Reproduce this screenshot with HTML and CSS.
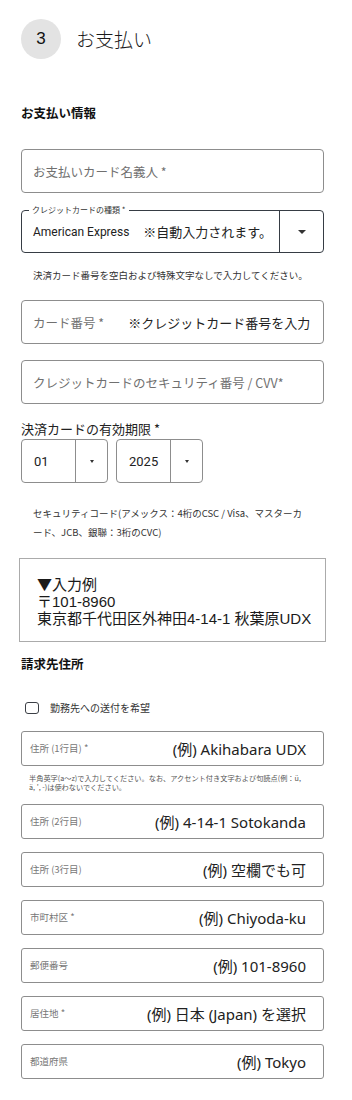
FILE: index.html
```html
<!DOCTYPE html>
<html lang="ja">
<head>
<meta charset="utf-8">
<link rel="stylesheet" href="styles.css">
</head>
<body>
<div class="page">
  <div class="step">
    <div class="step-num">3</div>
    <div class="step-title">お支払い</div>
  </div>

  <h2 class="section-title first">お支払い情報</h2>

  <div class="field big"><span class="ph">お支払いカード名義人 *</span></div>

  <div class="select-main">
    <span class="float-label">クレジットカードの種類 *</span>
    <div class="sel-value"><span class="amex">American Express</span><span class="auto">※自動入力されます。</span></div>
    <div class="sel-btn"><span class="tri"></span></div>
  </div>

  <p class="hint1">決済カード番号を空白および特殊文字なしで入力してください。</p>

  <div class="field big"><span class="ph">カード番号 *</span><span class="note-in">※クレジットカード番号を入力</span></div>

  <div class="field big gap16"><span class="ph">クレジットカードのセキュリティ番号 / CVV*</span></div>

  <div class="exp-label">決済カードの有効期限 *</div>
  <div class="exp-row">
    <div class="mini-sel"><span class="mv">01</span><span class="mb"><span class="tri small"></span></span></div>
    <div class="mini-sel"><span class="mv">2025</span><span class="mb"><span class="tri small"></span></span></div>
  </div>

  <p class="hint2">セキュリティコード(アメックス：4桁のCSC / Visa、マスターカ<br>ード、JCB、銀聯：3桁のCVC)</p>

  <div class="example">
    <div class="ex-line"><span class="mark">▼</span>入力例</div>
    <div class="ex-line">〒101-8960</div>
    <div class="ex-line">東京都千代田区外神田4-14-1 秋葉原UDX</div>
  </div>

  <h2 class="section-title second">請求先住所</h2>

  <label class="check-row"><span class="box"></span><span class="check-text">勤務先への送付を希望</span></label>

  <div class="addr first-addr"><span class="al">住所 (1行目) *</span><span class="av">(例) Akihabara UDX</span></div>
  <p class="hint3">半角英字(a～z)で入力してください。なお、アクセント付き文字および句読点(例：ü,<br>ä, ', -)は使わないでください。</p>
  <div class="addr after-hint"><span class="al">住所 (2行目)</span><span class="av">(例) 4-14-1 Sotokanda</span></div>
  <div class="addr"><span class="al">住所 (3行目)</span><span class="av">(例) 空欄でも可</span></div>
  <div class="addr"><span class="al">市町村区 *</span><span class="av">(例) Chiyoda-ku</span></div>
  <div class="addr"><span class="al">郵便番号</span><span class="av">(例) 101-8960</span></div>
  <div class="addr"><span class="al">居住地 *</span><span class="av">(例) 日本 (Japan) を選択</span></div>
  <div class="addr"><span class="al">都道府県</span><span class="av">(例) Tokyo</span></div>
</div>
</body>
</html>
```

FILE: styles.css
```css
* { box-sizing: border-box; }
html, body { margin: 0; padding: 0; background: #fff; }
body {
  font-family: "Noto Sans CJK JP", "Noto Sans", sans-serif;
  color: #222;
}
.page {
  width: 352px;
  padding: 19px 28px 20px 21px;
}
.step {
  display: flex;
  align-items: center;
  gap: 15px;
}
.step-num {
  width: 40px;
  height: 40px;
  border-radius: 50%;
  background: #e3e3e3;
  display: flex;
  align-items: center;
  justify-content: center;
  font-family: "Liberation Sans", Arial, sans-serif;
  font-size: 17px;
  color: #111;
}
.step-title {
  font-size: 19px;
  font-weight: 300;
  color: #1a1a1a;
  line-height: 24px;
}
.section-title {
  margin: 0;
  font-size: 12.5px;
  font-weight: 700;
  line-height: 18px;
  color: #111;
}
.section-title.first { margin-top: 45px; }
.section-title.second { margin-top: 13px; }

.field {
  border: 1px solid #8d8d8d;
  border-radius: 4px;
  height: 44px;
  display: flex;
  align-items: center;
  padding-left: 11px;
}
.field.big { margin-top: 27px; }
.field.gap16 { margin-top: 16px; }
.ph {
  font-size: 12.5px;
  color: #707070;
  white-space: nowrap;
}
.note-in {
  font-size: 13px;
  color: #222;
  margin-left: 24px;
  white-space: nowrap;
}

.select-main {
  position: relative;
  margin-top: 17px;
  height: 43px;
  border: 1.5px solid #363c44;
  border-radius: 4px;
  display: flex;
}
.float-label {
  position: absolute;
  top: -7px;
  left: 7px;
  padding: 0 3px;
  background: #fff;
  font-size: 8px;
  line-height: 12px;
  color: #333;
}
.sel-value {
  flex: 1;
  display: flex;
  align-items: center;
  padding-left: 11px;
  border-right: 1.5px solid #363c44;
  white-space: nowrap;
}
.amex {
  font-family: Roboto, "Noto Sans", sans-serif;
  font-size: 12px;
  color: #222;
}
.auto {
  font-size: 13px;
  color: #222;
  margin-left: 14px;
}
.sel-btn {
  width: 43px;
  display: flex;
  align-items: center;
  justify-content: center;
}
.tri {
  width: 0;
  height: 0;
  border-left: 4px solid transparent;
  border-right: 4px solid transparent;
  border-top: 4px solid #333;
}
.tri.small {
  border-left-width: 2.5px;
  border-right-width: 2.5px;
  border-top-width: 3px;
}

.hint1 {
  margin: 15px 0 0 12px;
  font-size: 9.5px;
  line-height: 14px;
  color: #333;
  white-space: nowrap;
}
.hint1 + .field.big { margin-top: 18px; }

.exp-label {
  margin-top: 16px;
  font-size: 13px;
  line-height: 17px;
  color: #222;
}
.exp-row {
  display: flex;
  gap: 8px;
  margin-top: 2px;
}
.mini-sel {
  width: 87px;
  height: 44px;
  border: 1px solid #8d8d8d;
  border-radius: 4px;
  display: flex;
}
.mv {
  flex: 1;
  display: flex;
  align-items: center;
  padding-left: 12px;
  font-family: Roboto, "Noto Sans", sans-serif;
  font-size: 13px;
  color: #222;
  border-right: 1px solid #8d8d8d;
}
.mb {
  width: 31px;
  display: flex;
  align-items: center;
  justify-content: center;
}

.hint2 {
  margin: 21px 0 0 12px;
  font-size: 9.5px;
  line-height: 19px;
  color: #333;
  white-space: nowrap;
}

.example {
  margin: 16px -2px 0 -2px;
  border: 1px solid #ababab;
  padding: 16px 10px 13px 17px;
  font-family: "Liberation Sans", "Noto Sans CJK JP", sans-serif;
  font-size: 15px;
  line-height: 17.5px;
  color: #1a1a1a;
  white-space: nowrap;
}
.ex-line {
  height: 17.5px;
}
.mark {
  font-family: "Noto Sans CJK JP", sans-serif;
}

.check-row {
  display: flex;
  align-items: center;
  margin-top: 28px;
  padding-left: 4px;
  height: 14px;
}
.box {
  width: 14px;
  height: 12px;
  border: 1.5px solid #3b3f45;
  border-radius: 3px;
}
.check-text {
  margin-left: 11px;
  font-size: 10px;
  color: #333;
}

.addr {
  height: 35px;
  border: 1px solid #8d8d8d;
  border-radius: 3px;
  display: flex;
  align-items: center;
  justify-content: space-between;
  padding: 0 17px 0 8px;
  margin-top: 13px;
  white-space: nowrap;
}
.addr.first-addr { margin-top: 16px; }
.addr.after-hint { margin-top: 12px; }
.al {
  font-size: 9.5px;
  color: #777;
}
.av {
  font-family: "Noto Sans", "Noto Sans CJK JP", sans-serif;
  font-size: 15px;
  color: #222;
}
.hint3 {
  margin: 8px 0 0 8px;
  font-size: 7.2px;
  line-height: 9px;
  color: #555;
  white-space: nowrap;
}
```
